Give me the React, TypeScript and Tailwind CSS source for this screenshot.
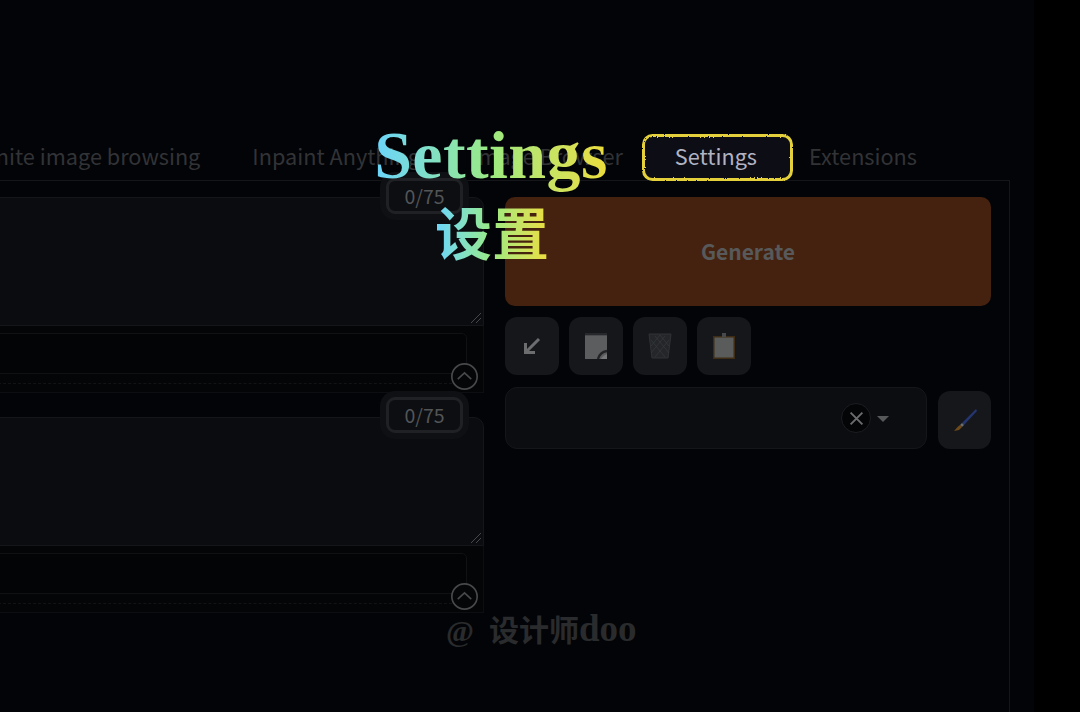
const ui = { fontFamily: '"Noto Sans CJK SC", "Noto Sans", sans-serif' };
const serif = { fontFamily: '"Liberation Serif", "Noto Sans CJK SC", serif' };

const tabs = ['Infinite image browsing', 'Inpaint Anything', 'Image Browser'];

const Chevron = () => (
  <svg viewBox="0 0 26 26" className="absolute right-[5px] bottom-[2px] h-[27px] w-[27px]" fill="none" stroke="#47494b" strokeWidth="1.6">
    <circle cx="13" cy="13" r="12.2" fill="#050608" />
    <path d="M6.5 15.5 13 9.5l6.5 6" />
  </svg>
);

const Counter = ({ className }: { className: string }) => (
  <div className={`absolute flex h-[36px] w-[77px] items-center justify-center rounded-[9px] border-[3px] border-[#1f2124] bg-[#0c0e11] text-[19.5px] leading-none text-[#535557] shadow-[0_0_0_6px_#0e1013] ${className}`}>
    0/75
  </div>
);

const PromptBox = ({ className }: { className: string }) => (
  <div className={`relative -ml-[8px] ${className}`}>
    <div className="relative h-[129px] rounded-tr-[10px] border border-[#14161a] bg-[#0a0c10]">
      <svg viewBox="0 0 12 12" className="absolute right-[1px] bottom-[1px] h-[12px] w-[12px]" stroke="#46484b" strokeWidth="1">
        <path d="M1 11 11 1M6 11l5-5" />
      </svg>
    </div>
    <div className="relative h-[67px] border border-t-0 border-[#0d0e11] bg-[#040507] pt-[7px] pr-[16px]">
      <div className="h-[41px] rounded-r-[5px] border border-[#101114] bg-[#030406]" />
      <div className="mt-[9px] border-t border-dashed border-[#121317]" />
      <Chevron />
    </div>
  </div>
);

const IconButton = ({ children, className }: { children: React.ReactNode; className: string }) => (
  <div className={`flex h-[58px] items-center justify-center rounded-[12px] bg-[#15171b] ${className}`}>{children}</div>
);

export default function App() {
  return (
    <div className="relative flex h-[712px] w-[1080px] overflow-hidden bg-black" style={ui}>
      <div className="h-full w-[1034px] shrink-0 overflow-hidden bg-[#030407]">
        {/* tab bar */}
        <div className="flex h-[180px] items-end justify-end pr-[91px] whitespace-nowrap">
          {tabs.map((t) => (
            <div key={t} className="flex h-[46px] items-center px-[26px] pb-[1px] text-[21.7px] text-[#323336]">{t}</div>
          ))}
          <div className="relative flex h-[46px] items-center px-[26px] pb-[1px] text-[21.7px] text-[#b2b3c2]">
            <svg className="absolute top-0 -left-[7px] h-[47px] w-[151px]" viewBox="0 0 151 47" fill="#0b0d14" stroke="#e3d03a" strokeWidth="3">
              <filter id="chalk">
                <feTurbulence type="fractalNoise" baseFrequency="0.9" numOctaves="2" seed="4" />
                <feDisplacementMap in="SourceGraphic" scale="2.5" />
              </filter>
              <rect x="1.5" y="1.5" width="148" height="44" rx="9" filter="url(#chalk)" />
            </svg>
            <span className="relative">Settings</span>
          </div>
          <div className="flex h-[46px] items-center px-[26px] pb-[1px] text-[21.7px] text-[#323336]">Extensions</div>
        </div>

        {/* panel */}
        <div className="flex h-[532px] w-[1010px] gap-[21px] border-t border-r border-[#14161a] pt-[16px] pr-[18px]">
          <div className="relative min-w-0 flex-1">
            <PromptBox className="" />
            <PromptBox className="mt-[24px]" />
            <Counter className="top-[-19px] right-[21px]" />
            <Counter className="top-[200px] right-[21px]" />
          </div>

          <div className="w-[486px] shrink-0">
            <div className="flex h-[109px] items-center justify-center rounded-[10px] bg-[#45220f] text-[21px] font-bold text-[#57595a]">Generate</div>

            <div className="mt-[11px] flex gap-[10px]">
              <IconButton className="w-[54px]">
                <svg viewBox="0 0 20 20" className="h-[20px] w-[20px]" fill="none" stroke="#6c6d6f" strokeWidth="3">
                  <path d="M17 3 5 15M3.5 7v9.5H13" />
                </svg>
              </IconButton>
              <IconButton className="w-[54px]">
                <svg viewBox="0 0 22 26" className="h-[26px] w-[22px]">
                  <path d="M0 2h22v24H0z" fill="#5c5d5e" />
                  <path d="M0 0v3M2 0v3M4 0v3M6 0v3M8 0v3M10 0v3M12 0v3M14 0v3M16 0v3M18 0v3M20 0v3M22 0v3" stroke="#3a3b3d" strokeWidth="1" />
                  <path d="M13 26c1-4 3-7 9-8" fill="none" stroke="#232427" strokeWidth="2.4" />
                  <path d="M16 26c1-2 3-4 6-5v5z" fill="#77787a" />
                </svg>
              </IconButton>
              <IconButton className="w-[54px]">
                <svg viewBox="0 0 24 26" className="h-[26px] w-[24px]">
                  <path d="M1 1h22l-3 24H4z" fill="#242629" stroke="#303235" />
                  <path d="M3 7l14 17M7 3l14 17M21 7 7 24M17 3 3 20M12 2 3 13M12 2l9 11" stroke="#37393c" strokeWidth=".7" />
                </svg>
              </IconButton>
              <IconButton className="w-[54px]">
                <svg viewBox="0 0 22 26" className="h-[26px] w-[22px]">
                  <path d="M0 3h22v23H0z" fill="#3f2c14" />
                  <path d="M1.5 4.5h19v20h-19z" fill="#5a5b5b" />
                  <path d="M9 0h4v4H9z" fill="#47494b" />
                </svg>
              </IconButton>
            </div>

            <div className="mt-[12px] flex items-end gap-[11px]">
              <div className="relative flex h-[62px] flex-1 items-center justify-end rounded-[12px] border border-[#14161a] bg-[#0b0d10] pr-[55px]">
                <div className="flex h-[30px] w-[30px] items-center justify-center rounded-full border border-[#1b1d20] bg-[#040507]">
                  <svg viewBox="0 0 14 14" className="h-[15px] w-[15px]" stroke="#6b6c6d" strokeWidth="1.8">
                    <path d="M1.5 1.5l11 11M12.5 1.5l-11 11" />
                  </svg>
                </div>
                <svg viewBox="0 0 12 6" className="absolute right-[37px] mt-[1px] h-[6px] w-[12px]">
                  <path d="M0 0h12L6 6z" fill="#57585a" />
                </svg>
              </div>
              <IconButton className="w-[53px]">
                <svg viewBox="0 0 24 24" className="h-[24px] w-[24px]">
                  <path d="M23 1 9 15l2 2L24 3z" fill="#24356f" />
                  <path d="M9 15l2 2-2 2-2-2z" fill="#6b6c6d" />
                  <path d="M7 17l2 2-3 3-5 1c2-2 3-4 6-6z" fill="#6f4a1a" />
                </svg>
              </IconButton>
            </div>
          </div>
        </div>
      </div>
      <div className="flex-1 bg-black" />

      {/* title overlay */}
      <div className="absolute top-[115px] left-[374px] flex w-[234px] flex-col items-center" style={serif}>
        <div className="bg-gradient-to-r from-[#6bd4fb] via-[#9bea80] to-[#ecdc3a] bg-clip-text text-[68px] leading-[80px] font-bold tracking-[0.4px] whitespace-nowrap text-transparent">Settings</div>
        <div className="mt-[5px] ml-[2px] bg-gradient-to-r from-[#6bd4fb] via-[#9bea80] to-[#ecdc3a] bg-clip-text text-[57px] leading-[72px] font-bold whitespace-nowrap text-transparent">设置</div>
      </div>

      {/* watermark */}
      <div className="absolute top-[609px] left-[446px] text-[30px] leading-[40px] font-bold whitespace-nowrap text-[#2a2b2d]" style={serif}>
        @<span className="ml-[15px]">设计师<span className="text-[37px]">doo</span></span>
      </div>
    </div>
  );
}
